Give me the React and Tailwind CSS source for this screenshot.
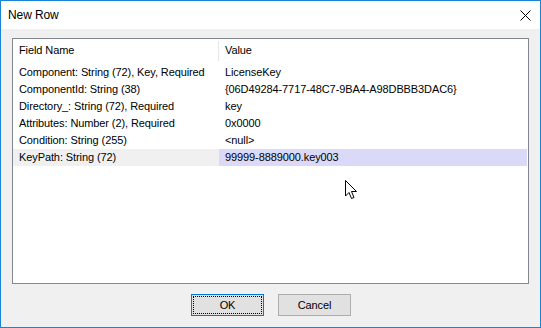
import React from 'react'

const rows = [
  ['Component: String (72), Key, Required', 'LicenseKey'],
  ['ComponentId: String (38)', '{06D49284-7717-48C7-9BA4-A98DBBB3DAC6}'],
  ['Directory_: String (72), Required', 'key'],
  ['Attributes: Number (2), Required', '0x0000'],
  ['Condition: String (255)', '<null>'],
  ['KeyPath: String (72)', '99999-8889000.key003'],
]

export default function App() {
  return (
    <div className="w-[541px] h-[328px] border border-[#1883d7] bg-[#f0f0f0] flex flex-col text-[11px] tracking-[-0.1px] text-black whitespace-nowrap" style={{ fontFamily: '"Liberation Sans", Arial, sans-serif' }}>
      <div className="h-[28px] bg-white flex items-center justify-between pl-[7px] pr-[9px] shrink-0">
        <span className="leading-none text-[12px]">New Row</span>
        <svg width="11" height="11" viewBox="0 0 11 11" className="mt-[1px]">
          <path d="M0.5 0.5 L10.5 10.5 M10.5 0.5 L0.5 10.5" stroke="#000" strokeWidth="1" />
        </svg>
      </div>
      <div className="flex-1 flex flex-col px-[11px] pt-[9px] pb-[11px]">
        <div className="h-[246px] bg-white border border-[#828790] pt-[1px] pr-[1px]">
          <div className="flex h-[21px] items-center">
            <div className="w-[205px] pl-[6px]">Field Name</div>
            <div className="w-px h-[20px] bg-[#e5e5e5]" />
            <div className="pl-[6px]">Value</div>
          </div>
          <div className="pt-[3px]">
            {rows.map(([f, v], i) => {
              const sel = i === rows.length - 1
              return (
                <div key={i} className="flex h-[17px] items-center">
                  <div className={`w-[206px] h-full pl-[6px] flex items-center ${sel ? 'bg-[#f0f0f0]' : ''}`}>{f}</div>
                  <div className={`flex-1 h-full pl-[6px] flex items-center ${sel ? 'bg-[#dadaf8]' : ''}`}>{v}</div>
                </div>
              )
            })}
          </div>
          <div className="flex pt-[14px] pl-[332px]">
            <svg width="13" height="21" viewBox="0 0 13 21">
              <path d="M0.5 0.5 L0.5 16 L4 12.5 L6.5 18.5 L9 17.5 L6.5 11.5 L11.5 11.5 Z" fill="#fff" stroke="#000" strokeWidth="1" strokeLinejoin="miter" />
            </svg>
          </div>
        </div>
        <div className="flex justify-center gap-[14px] pt-[10px] pl-[1px]">
          <button className="w-[73px] h-[22px] bg-[#e1e1e1] border border-[#0078d7] outline outline-1 outline-dotted outline-offset-[-3px] outline-black flex items-center justify-center">OK</button>
          <button className="w-[73px] h-[22px] bg-[#e1e1e1] border border-[#adadad] flex items-center justify-center">Cancel</button>
        </div>
      </div>
    </div>
  )
}
